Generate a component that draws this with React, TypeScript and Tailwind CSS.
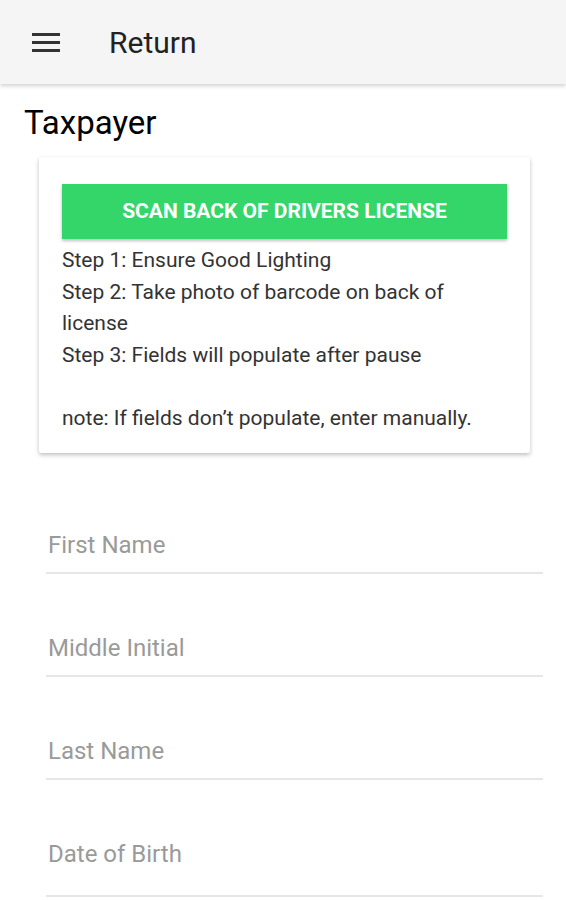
import type { ReactNode } from "react";

const fields = ["First Name", "Middle Initial", "Last Name", "Date of Birth"];

export default function App(): ReactNode {
    return (
        <div className="min-h-[900px] bg-white font-['Roboto',sans-serif]">
            <header className="h-[84px] bg-[#f5f5f5] flex items-center shadow-[0_2px_4px_rgba(0,0,0,0.18)] relative">
                <div className="w-[28px] ml-[32px] flex flex-col gap-[5px]">
                    <span className="block h-[3px] bg-[#333]" />
                    <span className="block h-[3px] bg-[#333]" />
                    <span className="block h-[3px] bg-[#333]" />
                </div>
                <div className="ml-[49px] text-[30px] text-[#222]">Return</div>
            </header>

            <h1 className="mt-[18px] ml-[24px] text-[33px] leading-[42px] text-black">Taxpayer</h1>

            <div className="mt-[13px] ml-[39px] w-[491px] bg-white rounded-[2px] shadow-[0_2px_4px_rgba(0,0,0,0.25)] pt-[27px] pb-[19px] px-[23px]">
                <button className="w-full h-[55px] bg-[#34d66a] text-white font-bold text-[21px] shadow-[0_2px_3px_rgba(0,0,0,0.25)]">
                    SCAN BACK OF DRIVERS LICENSE
                </button>
                <div className="mt-[6px] text-[21px] leading-[31.5px] text-[#333]">
                    <div>Step 1: Ensure Good Lighting</div>
                    <div>Step 2: Take photo of barcode on back of license</div>
                    <div>Step 3: Fields will populate after pause</div>
                    <div>&nbsp;</div>
                    <div>note: If fields don’t populate, enter manually.</div>
                </div>
            </div>

            <div className="mt-[18px] ml-[46px] mr-[23px] flex flex-col">
                {fields.map((f, i) => (
                    <div key={f}>
                        <div className="h-[101px] flex flex-col justify-end">
                            <div className="text-[24px] leading-[28px] text-[#9a9a9a] pl-[2px] pb-[13px]">{f}</div>
                        </div>
                        <div className={`h-[2px] bg-[#e6e6e6] ${i === 3 ? "mt-[14px]" : ""}`} />
                    </div>
                ))}
            </div>
        </div>
    )
}
